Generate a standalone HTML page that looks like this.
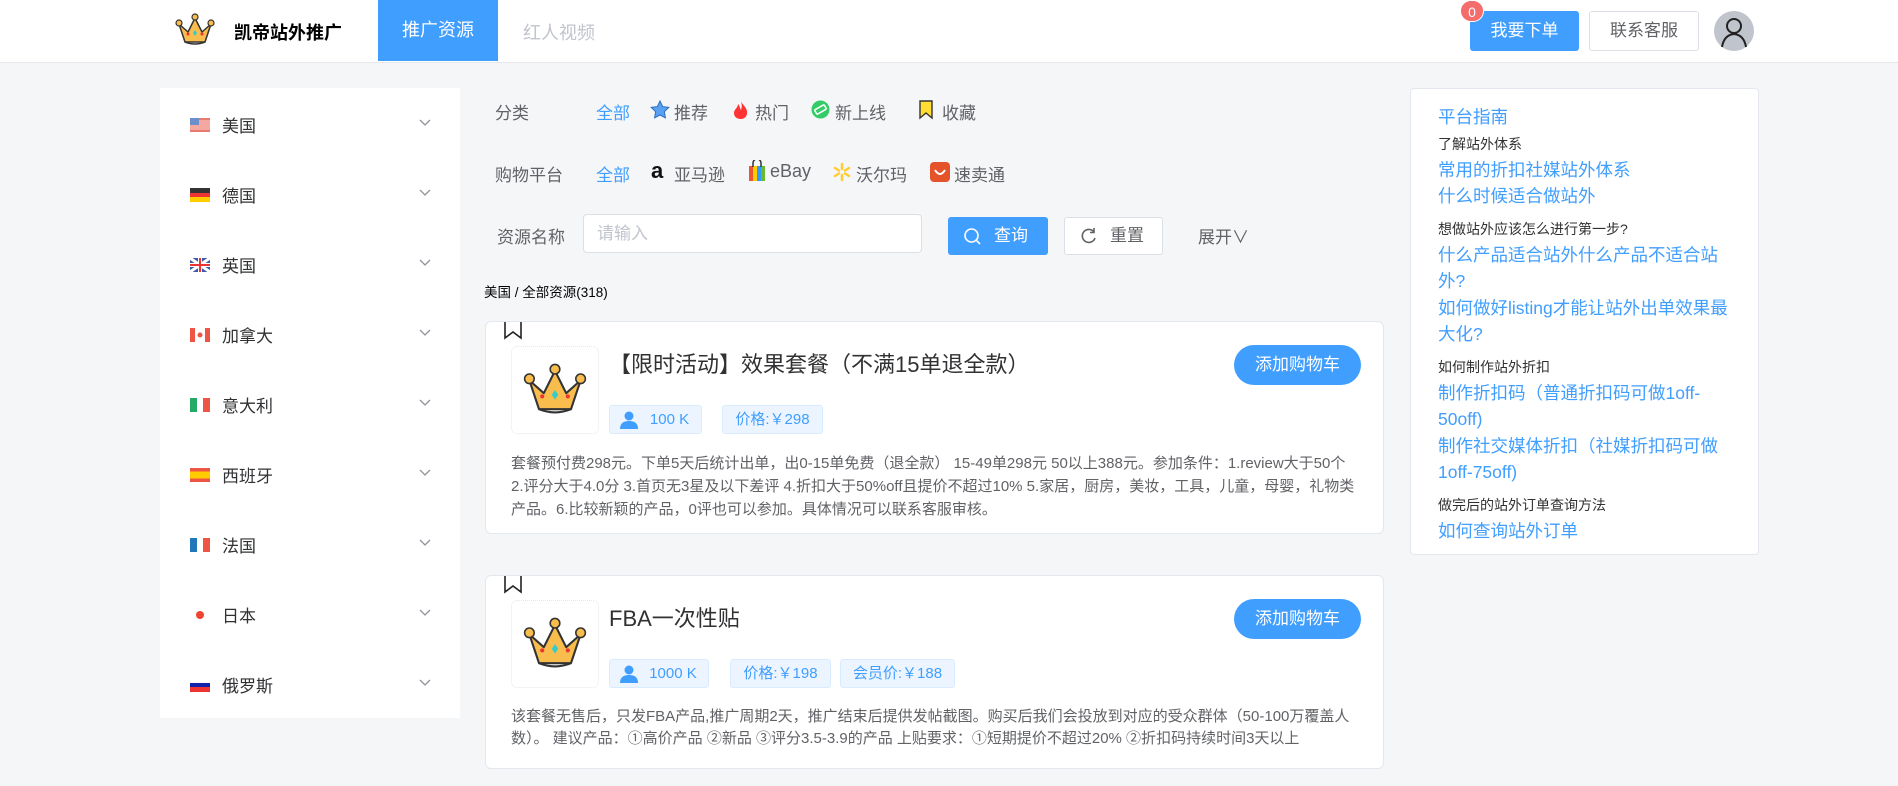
<!DOCTYPE html>
<html><head><meta charset="utf-8"><style>
*{box-sizing:border-box;margin:0;padding:0}
body{width:1898px;height:786px;overflow:hidden;background:#f5f6f8;font-family:"Liberation Sans","Noto Sans CJK SC",sans-serif;position:relative;color:#303133}
.a{position:absolute;white-space:nowrap}
.hdr{position:absolute;left:0;top:0;width:1898px;height:63px;background:#fff;border-bottom:1px solid #e6e8eb}
.blue{color:#409eff}
.side{position:absolute;left:160px;top:88px;width:300px;height:630px;background:#fff}
.item{position:absolute;left:0;width:300px;height:30px}
.flag{position:absolute;left:30px;top:8px;width:20px;height:14px}
.item span{position:absolute;left:62px;top:2px;font-size:17px;color:#303133}
.chev{position:absolute;left:258px;top:8px}
.lbl{font-size:17px;color:#606266}
.card{position:absolute;left:485px;width:899px;background:#fff;border:1px solid #e4e7ed;border-radius:6px}
.img{position:absolute;left:25px;top:24px;width:88px;height:88px;border:1px dotted #e4e7ed;border-radius:6px}
.tag{position:absolute;height:29px;background:#ecf5ff;border:1px solid #d9ecff;border-radius:3px;color:#409eff;font-size:15px;line-height:27px;text-align:center}
.btn{position:absolute;left:748px;top:23px;width:127px;height:40px;border-radius:20px;background:#409eff;color:#fff;font-size:17px;line-height:40px;text-align:center}
.desc{position:absolute;left:25px;width:850px;font-size:15px;color:#606266;line-height:23px}
.title{position:absolute;left:123px;font-size:22px;color:#303133}
.rp{position:absolute;left:1410px;top:88px;width:349px;height:467px;background:#fff;border:1px solid #e4e7ed;border-radius:4px;padding:15px 0 0 27px}
.rp .b{color:#409eff;font-size:17.5px;line-height:26.5px;width:300px}
.rp .k{color:#303133;font-size:14px;line-height:26px}
</style></head><body>
<div class="hdr"></div>
<svg class="a" style="left:175px;top:12px" width="40" height="36" viewBox="0 0 40 36"><path d="M4 12 L10 30 L30 30 L36 12 L27 20 L20 6 L13 20 Z" fill="#f8bd4c" stroke="#333" stroke-width="1.5" stroke-linejoin="round"/><circle cx="4" cy="11" r="3" fill="#f8bd4c" stroke="#333" stroke-width="1.2"/><circle cx="36" cy="11" r="3" fill="#f8bd4c" stroke="#333" stroke-width="1.2"/><circle cx="20" cy="5" r="3" fill="#f8bd4c" stroke="#333" stroke-width="1.2"/><path d="M20 18 l2 3 -2 3 -2 -3z" fill="#3cc"/><circle cx="13" cy="22" r="1.5" fill="#e33"/><circle cx="27" cy="22" r="1.5" fill="#e33"/><path d="M10 30 Q20 34 30 30" stroke="#333" fill="none" stroke-width="1.5"/></svg>
<div class="a" style="left:234px;top:19px;font-size:18px;font-weight:bold;color:#000">凯帝站外推广</div>
<div class="a" style="left:378px;top:0;width:120px;height:61px;background:#409eff;color:#fff;font-size:18px;line-height:61px;text-align:center">推广资源</div>
<div class="a" style="left:523px;top:19px;font-size:18px;color:#c0c4cc">红人视频</div>
<div class="a" style="left:1470px;top:11px;width:109px;height:40px;background:#409eff;border-radius:3px;color:#fff;font-size:17px;line-height:40px;text-align:center">我要下单</div>
<div class="a" style="left:1460px;top:0;width:24px;height:22px;border-radius:11px;background:#f56c6c;color:#fff;font-size:14px;line-height:22px;text-align:center;border:1px solid #fff">0</div>
<div class="a" style="left:1589px;top:11px;width:110px;height:40px;border:1px solid #dcdfe6;border-radius:3px;color:#606266;font-size:17px;line-height:38px;text-align:center;background:#fff">联系客服</div>
<svg class="a" style="left:1714px;top:11px" width="40" height="40" viewBox="0 0 40 40"><circle cx="20" cy="20" r="20" fill="#c0c4cc"/><circle cx="20" cy="15" r="7" fill="none" stroke="#222" stroke-width="2"/><path d="M8 36 Q10 24 20 23 Q30 24 32 36" fill="none" stroke="#222" stroke-width="2"/></svg>

<div class="side">
<div class="item" style="top:22px"><svg class="flag" viewBox="0 0 20 14"><rect width="20" height="14" fill="#f4a9a0"/><rect y="0" width="20" height="2" fill="#e87a70"/><rect y="12" width="20" height="2" fill="#e87a70"/><rect width="9" height="7" fill="#6a8fcc"/></svg><span>美国</span><svg class="chev" width="14" height="10"><path d="M2 2l5 5 5-5" stroke="#909399" fill="none" stroke-width="1.3"/></svg></div>
<div class="item" style="top:92px"><svg class="flag" viewBox="0 0 20 14"><rect width="20" height="5" fill="#333"/><rect y="5" width="20" height="4" fill="#e33"/><rect y="9" width="20" height="5" fill="#fc0"/></svg><span>德国</span><svg class="chev" width="14" height="10"><path d="M2 2l5 5 5-5" stroke="#909399" fill="none" stroke-width="1.3"/></svg></div>
<div class="item" style="top:162px"><svg class="flag" viewBox="0 0 20 14"><rect width="20" height="14" fill="#3b5aa8"/><path d="M0 0L20 14M20 0L0 14" stroke="#fff" stroke-width="3"/><path d="M10 0v14M0 7h20" stroke="#fff" stroke-width="4"/><path d="M10 0v14M0 7h20" stroke="#e33" stroke-width="2"/></svg><span>英国</span><svg class="chev" width="14" height="10"><path d="M2 2l5 5 5-5" stroke="#909399" fill="none" stroke-width="1.3"/></svg></div>
<div class="item" style="top:232px"><svg class="flag" viewBox="0 0 20 14"><rect width="20" height="14" fill="#fff"/><rect width="5" height="14" fill="#e54"/><rect x="15" width="5" height="14" fill="#e54"/><circle cx="10" cy="7" r="2.5" fill="#e54"/></svg><span>加拿大</span><svg class="chev" width="14" height="10"><path d="M2 2l5 5 5-5" stroke="#909399" fill="none" stroke-width="1.3"/></svg></div>
<div class="item" style="top:302px"><svg class="flag" viewBox="0 0 20 14"><rect width="7" height="14" fill="#2a6"/><rect x="7" width="6" height="14" fill="#fff"/><rect x="13" width="7" height="14" fill="#e54"/></svg><span>意大利</span><svg class="chev" width="14" height="10"><path d="M2 2l5 5 5-5" stroke="#909399" fill="none" stroke-width="1.3"/></svg></div>
<div class="item" style="top:372px"><svg class="flag" viewBox="0 0 20 14"><rect width="20" height="14" fill="#e54"/><rect y="3.5" width="20" height="7" fill="#fc0"/></svg><span>西班牙</span><svg class="chev" width="14" height="10"><path d="M2 2l5 5 5-5" stroke="#909399" fill="none" stroke-width="1.3"/></svg></div>
<div class="item" style="top:442px"><svg class="flag" viewBox="0 0 20 14"><rect width="7" height="14" fill="#27b"/><rect x="7" width="6" height="14" fill="#fff"/><rect x="13" width="7" height="14" fill="#e54"/></svg><span>法国</span><svg class="chev" width="14" height="10"><path d="M2 2l5 5 5-5" stroke="#909399" fill="none" stroke-width="1.3"/></svg></div>
<div class="item" style="top:512px"><svg class="flag" viewBox="0 0 20 14"><circle cx="10" cy="7" r="4" fill="#e43"/></svg><span>日本</span><svg class="chev" width="14" height="10"><path d="M2 2l5 5 5-5" stroke="#909399" fill="none" stroke-width="1.3"/></svg></div>
<div class="item" style="top:582px"><svg class="flag" viewBox="0 0 20 14"><rect width="20" height="5" fill="#fff"/><rect y="5" width="20" height="4" fill="#12a"/><rect y="9" width="20" height="5" fill="#e33"/></svg><span>俄罗斯</span><svg class="chev" width="14" height="10"><path d="M2 2l5 5 5-5" stroke="#909399" fill="none" stroke-width="1.3"/></svg></div>
</div>

<div class="a lbl" style="left:495px;top:99px">分类</div>
<div class="a blue" style="left:596px;top:99px;font-size:17px">全部</div>
<svg class="a" style="left:650px;top:100px" width="20" height="20" viewBox="0 0 20 20"><path d="M10 1l2.7 5.6 6.1.8-4.4 4.3 1 6.1L10 15l-5.4 2.8 1-6.1L1.2 7.4l6.1-.8z" fill="#5aa0f0" stroke="#2d6fc0" stroke-width="1"/></svg>
<div class="a lbl" style="left:674px;top:99px">推荐</div>
<svg class="a" style="left:732px;top:100px" width="18" height="20" viewBox="0 0 18 20"><path d="M9 1C11 6 16 8 15 14 14 18 11 19 9 19 5 19 2 17 2 13 2 9 6 8 6 4 8 6 8 9 9 10 10 7 10 4 9 1z" fill="#f33"/></svg>
<div class="a lbl" style="left:755px;top:99px">热门</div>
<svg class="a" style="left:811px;top:100px" width="19" height="19"><circle cx="9.5" cy="9.5" r="9" fill="#3c6"/><rect x="4" y="7" width="11" height="5" rx="1" fill="none" stroke="#fff" stroke-width="1.5" transform="rotate(-30 9.5 9.5)"/></svg>
<div class="a lbl" style="left:835px;top:99px">新上线</div>
<svg class="a" style="left:918px;top:100px" width="16" height="20"><path d="M2 1h12v17l-6-5-6 5z" fill="#fd3" stroke="#333" stroke-width="1.4"/></svg>
<div class="a lbl" style="left:942px;top:99px">收藏</div>

<div class="a lbl" style="left:495px;top:161px">购物平台</div>
<div class="a blue" style="left:596px;top:161px;font-size:17px">全部</div>
<div class="a" style="left:651px;top:158px;font-size:22px;font-weight:bold;color:#111">a</div>
<div class="a lbl" style="left:674px;top:161px">亚马逊</div>
<svg class="a" style="left:748px;top:160px" width="18" height="22"><rect x="1" y="6" width="16" height="15" fill="#e53"/><rect x="5" y="6" width="4" height="15" fill="#fc0"/><rect x="9" y="6" width="4" height="15" fill="#39f"/><rect x="13" y="6" width="4" height="15" fill="#6b3"/><path d="M5 7V3a4 4 0 0 1 8 0v4" fill="none" stroke="#333" stroke-width="1.5"/></svg>
<div class="a lbl" style="left:770px;top:161px;font-size:18px">eBay</div>
<svg class="a" style="left:832px;top:162px" width="20" height="20" viewBox="0 0 20 20"><g stroke="#fc3" stroke-width="2.5" stroke-linecap="round"><path d="M10 2v5M10 13v5M3 6l4 2.5M13 11.5l4 2.5M3 14l4-2.5M13 8.5l4-2.5"/></g></svg>
<div class="a lbl" style="left:856px;top:161px">沃尔玛</div>
<svg class="a" style="left:930px;top:162px" width="20" height="20"><rect width="20" height="20" rx="4" fill="#e5532a"/><path d="M5 8q5 8 10 0" stroke="#fff" stroke-width="2" fill="none"/></svg>
<div class="a lbl" style="left:954px;top:161px">速卖通</div>

<div class="a lbl" style="left:497px;top:223px">资源名称</div>
<div class="a" style="left:583px;top:214px;width:339px;height:39px;border:1px solid #dcdfe6;border-radius:4px;background:#fff;padding-left:13px;color:#c0c4cc;font-size:17px;line-height:37px">请输入</div>
<div class="a" style="left:948px;top:217px;width:100px;height:38px;border-radius:3px;background:#409eff;color:#fff;font-size:17px;line-height:38px;padding-left:46px">查询</div>
<svg class="a" style="left:963px;top:227px" width="20" height="20"><circle cx="8.5" cy="8.5" r="6.5" fill="none" stroke="#fff" stroke-width="1.6"/><path d="M13 13l4 4" stroke="#fff" stroke-width="1.6"/></svg>
<div class="a" style="left:1064px;top:217px;width:99px;height:38px;border-radius:3px;border:1px solid #dcdfe6;background:#fff;color:#606266;font-size:17px;line-height:36px;padding-left:45px">重置</div>
<svg class="a" style="left:1080px;top:227px" width="18" height="18"><path d="M14 5A6.5 6.5 0 1 0 15 11" fill="none" stroke="#606266" stroke-width="1.6"/><path d="M14 1v4.5h-4" fill="none" stroke="#606266" stroke-width="1.6"/></svg>
<div class="a lbl" style="left:1198px;top:223px">展开∨</div>
<div class="a" style="left:484px;top:281px;font-size:13.5px;color:#000">美国 / 全部资源(318)</div>

<div class="card" style="top:321px;height:213px">
<svg class="a" style="left:17px;top:0" width="20" height="18"><path d="M2 0v16l8-6 8 6V0" fill="none" stroke="#222" stroke-width="1.6"/></svg>
<div class="img"><svg style="position:absolute;left:11px;top:12px" width="64" height="62" viewBox="0 0 40 36"><path d="M4 12 L10 30 L30 30 L36 12 L27 20 L20 6 L13 20 Z" fill="#f8bd4c" stroke="#333" stroke-width="1.3" stroke-linejoin="round"/><circle cx="4" cy="11" r="3" fill="#f8bd4c" stroke="#333" stroke-width="1"/><circle cx="36" cy="11" r="3" fill="#f8bd4c" stroke="#333" stroke-width="1"/><circle cx="20" cy="5" r="3" fill="#f8bd4c" stroke="#333" stroke-width="1"/><path d="M20 18 l2 3 -2 3 -2 -3z" fill="#3cc"/><circle cx="12" cy="22" r="1.3" fill="#e33"/><circle cx="28" cy="22" r="1.3" fill="#e33"/><path d="M10 30 Q20 34 30 30" stroke="#333" fill="none" stroke-width="1.3"/></svg></div>
<div class="title" style="top:25px">【限时活动】效果套餐（不满15单退全款）</div>
<div class="tag" style="left:123px;top:83px;width:93px"><span style="position:absolute;left:10px;top:5px;width:18px;height:18px"><svg width="18" height="18"><circle cx="9" cy="5" r="4.5" fill="#409eff"/><path d="M0 18q0-8 9-8t9 8z" fill="#409eff"/></svg></span><span style="padding-left:28px">100 K</span></div>
<div class="tag" style="left:236px;top:83px;width:101px">价格:￥298</div>
<div class="btn">添加购物车</div>
<div class="desc" style="top:130px">套餐预付费298元。下单5天后统计出单，出0-15单免费（退全款） 15-49单298元 50以上388元。参加条件：1.review大于50个 2.评分大于4.0分 3.首页无3星及以下差评 4.折扣大于50%off且提价不超过10% 5.家居，厨房，美妆，工具，儿童，母婴，礼物类产品。6.比较新颖的产品，0评也可以参加。具体情况可以联系客服审核。</div>
</div>

<div class="card" style="top:575px;height:194px">
<svg class="a" style="left:17px;top:0" width="20" height="18"><path d="M2 0v16l8-6 8 6V0" fill="none" stroke="#222" stroke-width="1.6"/></svg>
<div class="img"><svg style="position:absolute;left:11px;top:12px" width="64" height="62" viewBox="0 0 40 36"><path d="M4 12 L10 30 L30 30 L36 12 L27 20 L20 6 L13 20 Z" fill="#f8bd4c" stroke="#333" stroke-width="1.3" stroke-linejoin="round"/><circle cx="4" cy="11" r="3" fill="#f8bd4c" stroke="#333" stroke-width="1"/><circle cx="36" cy="11" r="3" fill="#f8bd4c" stroke="#333" stroke-width="1"/><circle cx="20" cy="5" r="3" fill="#f8bd4c" stroke="#333" stroke-width="1"/><path d="M20 18 l2 3 -2 3 -2 -3z" fill="#3cc"/><circle cx="12" cy="22" r="1.3" fill="#e33"/><circle cx="28" cy="22" r="1.3" fill="#e33"/><path d="M10 30 Q20 34 30 30" stroke="#333" fill="none" stroke-width="1.3"/></svg></div>
<div class="title" style="top:25px">FBA一次性贴</div>
<div class="tag" style="left:123px;top:83px;width:100px"><span style="position:absolute;left:10px;top:5px;width:18px;height:18px"><svg width="18" height="18"><circle cx="9" cy="5" r="4.5" fill="#409eff"/><path d="M0 18q0-8 9-8t9 8z" fill="#409eff"/></svg></span><span style="padding-left:28px">1000 K</span></div>
<div class="tag" style="left:244px;top:83px;width:101px">价格:￥198</div>
<div class="tag" style="left:354px;top:83px;width:115px">会员价:￥188</div>
<div class="btn">添加购物车</div>
<div class="desc" style="top:130px;line-height:22px">该套餐无售后，只发FBA产品,推广周期2天，推广结束后提供发帖截图。购买后我们会投放到对应的受众群体（50-100万覆盖人数）。 建议产品：①高价产品 ②新品 ③评分3.5-3.9的产品 上贴要求：①短期提价不超过20% ②折扣码持续时间3天以上</div>
</div>

<div class="rp">
<div class="b">平台指南</div>
<div class="k">了解站外体系</div>
<div class="b">常用的折扣社媒站外体系</div>
<div class="b">什么时候适合做站外</div>
<div class="k" style="margin-top:6px">想做站外应该怎么进行第一步?</div>
<div class="b">什么产品适合站外什么产品不适合站外?</div>
<div class="b">如何做好listing才能让站外出单效果最大化?</div>
<div class="k" style="margin-top:6px">如何制作站外折扣</div>
<div class="b">制作折扣码（普通折扣码可做1off-<br>50off)</div>
<div class="b">制作社交媒体折扣（社媒折扣码可做<br>1off-75off)</div>
<div class="k" style="margin-top:6px">做完后的站外订单查询方法</div>
<div class="b">如何查询站外订单</div>
</div>
</body></html>
